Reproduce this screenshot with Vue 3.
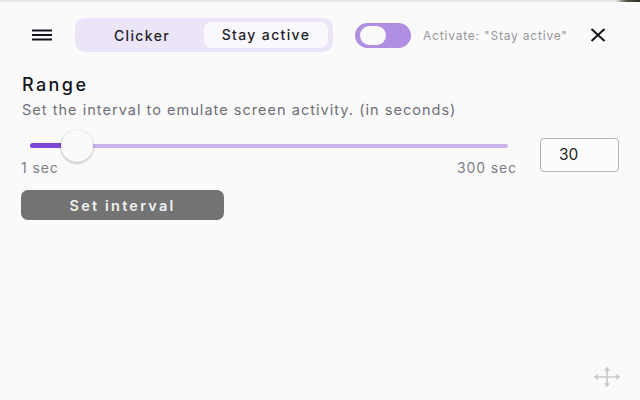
<script setup>
</script>

<template>
  <div class="page">
    <div class="strip"></div>
    <header class="head">
      <svg class="menu" width="22" height="12" viewBox="0 0 22 12"><path d="M1 1.5h20M1 6h20M1 10.5h20" stroke="#141420" stroke-width="1.8" fill="none"/></svg>
      <div class="seg">
        <div class="tab">Clicker</div>
        <div class="tab on">Stay active</div>
      </div>
      <div class="toggle"><span class="knob"></span></div>
      <span class="hint">Activate: "Stay active"</span>
      <svg class="close" width="16" height="14" viewBox="0 0 16 14"><path d="M1.5 1l13 12M14.5 1l-13 12" stroke="#10101c" stroke-width="1.9" fill="none"/></svg>
    </header>
    <main class="body">
      <h2 class="title">Range</h2>
      <p class="sub">Set the interval to emulate screen activity. (in seconds)</p>
      <div class="range-row">
        <div class="range-col">
          <div class="slider">
            <div class="track"></div>
            <div class="fill"></div>
            <div class="thumb"></div>
          </div>
          <div class="ends"><span>1 sec</span><span>300 sec</span></div>
        </div>
        <div class="num">30</div>
      </div>
      <button class="btn">Set interval</button>
    </main>
    <svg class="move" width="28" height="22" viewBox="0 0 28 22"><g stroke="#c9c9cb" stroke-width="1.6" fill="#c9c9cb"><path d="M2 11h24M14 2v18" fill="none"/><path d="M14 1l2.5 3.5h-5zM14 21l2.5-3.5h-5zM1 11l3.5-2.5v5zM27 11l-3.5-2.5v5z" stroke-width="0.6"/></g></svg>
  </div>
</template>

<style>
html, body { margin: 0; background: #fafafa; }
</style>

<style scoped>
.page {
  position: relative;
  width: 640px;
  height: 400px;
  box-sizing: border-box;
  overflow: hidden;
  background: #fafafa;
  font-family: Inter, "Open Sans", sans-serif;
}
.strip {
  height: 2px;
  background: linear-gradient(90deg, #e6e6e6 0, #e6e6e6 616px, #5a5644 626px, #2e2c22 640px);
}
.head {
  display: flex;
  align-items: center;
  height: 34px;
  margin-top: 16px;
  padding-left: 31px;
}
.menu { flex: none; }
.seg {
  display: flex;
  align-items: center;
  box-sizing: border-box;
  width: 258px;
  height: 34px;
  margin-left: 22px;
  padding: 4px 5px;
  border-radius: 10px;
  background: #ece5f8;
}
.tab {
  flex: 1;
  text-align: center;
  font-size: 14px;
  font-weight: 500;
  letter-spacing: 1.35px;
  color: #1f1f2b;
}
.tab.on {
  flex: none;
  width: 124px;
  height: 26px;
  line-height: 26px;
  border-radius: 8px;
  background: #faf8fd;
}
.toggle {
  flex: none;
  box-sizing: border-box;
  width: 56px;
  height: 25px;
  margin-left: 22px;
  padding: 3px 5px;
  border-radius: 13px;
  background: #b08fe3;
}
.knob {
  display: block;
  width: 26px;
  height: 19px;
  border-radius: 10px;
  background: #fafafa;
}
.hint {
  margin-left: 12px;
  width: 167px;
  flex: none;
  font-size: 12px;
  letter-spacing: 0.8px;
  color: #97979b;
  white-space: nowrap;
}
.close { flex: none; }
.body { padding: 0 21px; }
.title {
  margin: 22px 0 0 1px;
  font-size: 18px;
  line-height: 22px;
  font-weight: 500;
  letter-spacing: 2.4px;
  color: #14141a;
}
.sub {
  margin: 4px 0 0 1px;
  font-size: 14.5px;
  line-height: 20px;
  color: #6f6f78;
  letter-spacing: 1.03px;
  white-space: nowrap;
}
.range-row {
  display: flex;
  align-items: flex-start;
  margin-top: 17px;
}
.range-col { width: 496px; }
.slider {
  position: relative;
  height: 20px;
  margin: 0 9px;
}
.track {
  position: absolute;
  left: 0; right: 0; top: 7px;
  height: 4px;
  border-radius: 2px;
  background: #c9b3ea;
}
.fill {
  position: absolute;
  left: 0; top: 6px;
  width: 34px;
  height: 5px;
  border-radius: 3px;
  background: #7c49d6;
}
.thumb {
  position: absolute;
  left: 31px; top: -7px;
  width: 32px;
  height: 32px;
  border-radius: 50%;
  background: #fafafa;
  box-shadow: 0 1px 3px rgba(0,0,0,.3);
}
.ends {
  display: flex;
  justify-content: space-between;
  margin-top: 2px;
  font-size: 14px;
  line-height: 18px;
  letter-spacing: 0.9px;
  color: #7d7d88;
}
.num {
  box-sizing: border-box;
  width: 79px;
  height: 34px;
  margin-left: 23px;
  margin-top: 1px;
  padding-left: 18px;
  line-height: 32px;
  font-size: 15.5px;
  color: #1f1f2b;
  border: 1px solid #b4b4b4;
  border-radius: 4px;
  background: #fcfcfc;
}
.btn {
  display: block;
  width: 203px;
  height: 30px;
  margin-top: 13px;
  padding: 0;
  border: none;
  border-radius: 7px;
  background: #737373;
  color: #f0f0f0;
  font-family: inherit;
  font-size: 14.5px;
  font-weight: 600;
  letter-spacing: 2.2px;
}
.move {
  position: absolute;
  left: 593px;
  top: 366px;
}
</style>
